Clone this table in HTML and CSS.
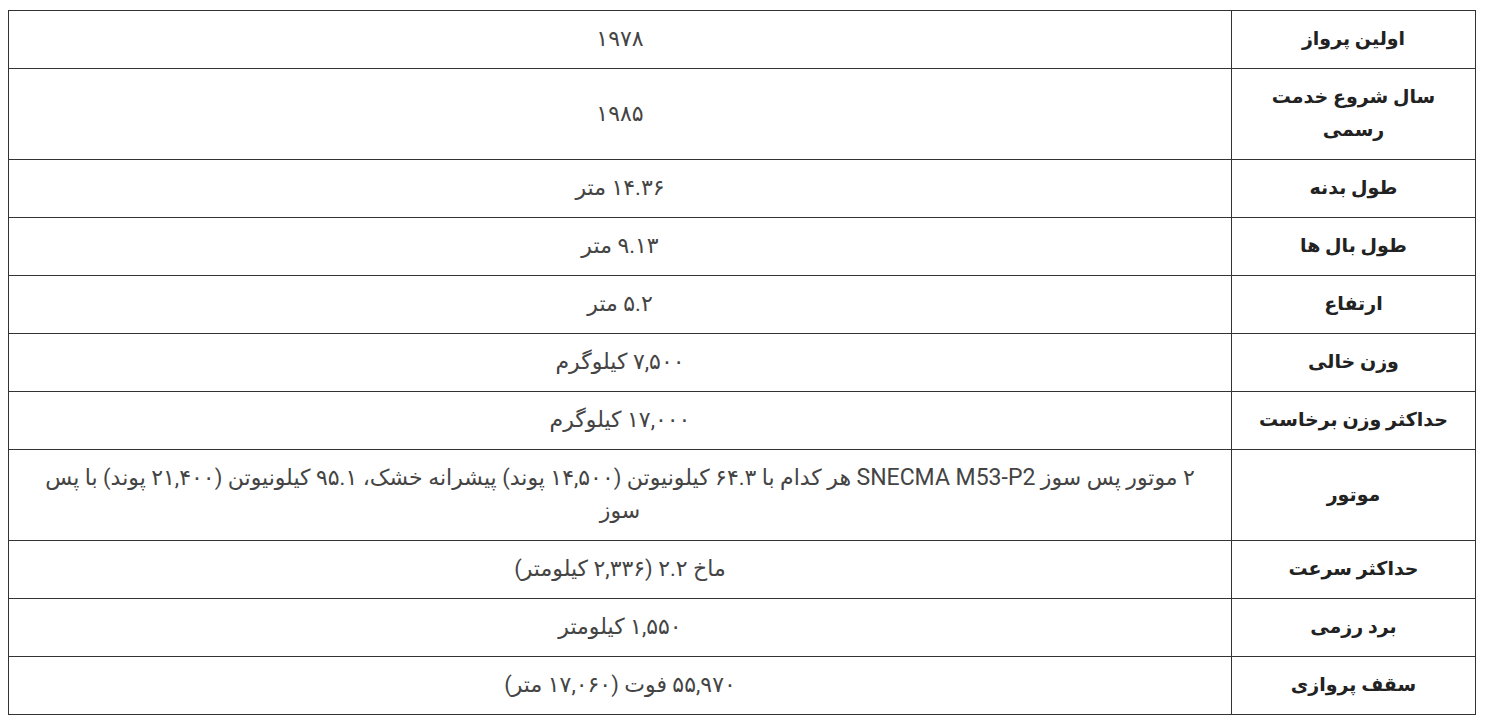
FILE: index.html
```html
<!DOCTYPE html>
<html lang="fa" dir="rtl">
<head>
<meta charset="utf-8">
<title>مشخصات</title>
<link rel="stylesheet" href="styles.css">
</head>
<body>
<table class="spec">
  <tbody>
    <tr><th>اولین پرواز</th><td>۱۹۷۸</td></tr>
    <tr><th>سال شروع خدمت رسمی</th><td>۱۹۸۵</td></tr>
    <tr><th>طول بدنه</th><td>۱۴.۳۶ متر</td></tr>
    <tr><th>طول بال ها</th><td>۹.۱۳ متر</td></tr>
    <tr><th>ارتفاع</th><td>۵.۲ متر</td></tr>
    <tr><th>وزن خالی</th><td>۷,۵۰۰ کیلوگرم</td></tr>
    <tr><th>حداکثر وزن برخاست</th><td>۱۷,۰۰۰ کیلوگرم</td></tr>
    <tr><th>موتور</th><td>۲ موتور پس سوز <span class="latin">SNECMA M53-P2</span> هر کدام با ۶۴.۳ کیلونیوتن (۱۴,۵۰۰ پوند) پیشرانه خشک، ۹۵.۱ کیلونیوتن (۲۱,۴۰۰ پوند) با پس سوز</td></tr>
    <tr><th>حداکثر سرعت</th><td>ماخ ۲.۲ (۲,۳۳۶ کیلومتر)</td></tr>
    <tr><th>برد رزمی</th><td>۱,۵۵۰ کیلومتر</td></tr>
    <tr><th>سقف پروازی</th><td>۵۵,۹۷۰ فوت (۱۷,۰۶۰ متر)</td></tr>
  </tbody>
</table>
</body>
</html>
```

FILE: styles.css
```css
html, body {
  background: #ffffff;
}
body {
  margin: 10px 12px 8px 8px;
  font-family: Roboto, "DejaVu Sans", sans-serif;
}
.spec {
  width: 1468px;
  border-collapse: collapse;
  direction: rtl;
  table-layout: fixed;
}
.spec th,
.spec td {
  border: 1px solid #333333;
  text-align: center;
  vertical-align: middle;
  padding: 11px 15px 13px;
  line-height: 33px;
}
.spec th {
  width: 213px;
  font-size: 19px;
  font-weight: bold;
  color: #222222;
}
.spec td {
  font-size: 22px;
  font-weight: normal;
  color: #444444;
}
.spec .latin {
  font-size: 23px;
}
```
